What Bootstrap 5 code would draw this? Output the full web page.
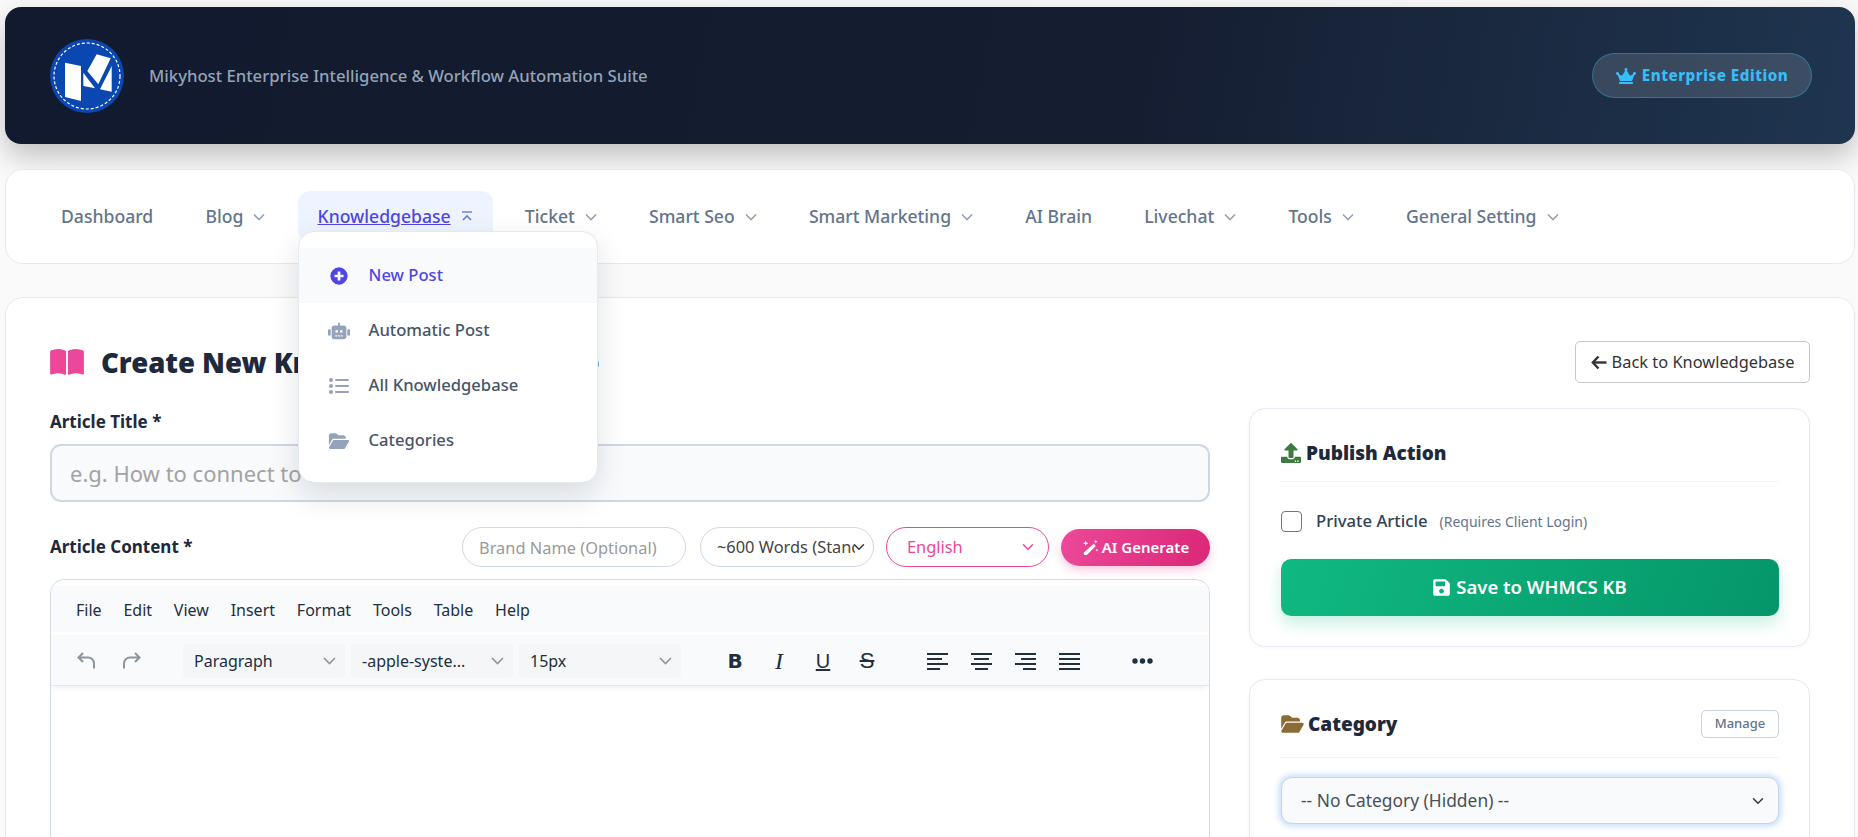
<!DOCTYPE html>
<html lang="en">
<head>
<meta charset="UTF-8">
<title>Create New Knowledgebase Article</title>
<link href="https://cdn.jsdelivr.net/npm/bootstrap@5.3.0/dist/css/bootstrap.min.css" rel="stylesheet">
<style>
    html, body { height: 837px; overflow: hidden; }
    body { background: #fafafb; font-family: "Noto Sans", sans-serif; color: #1e293b; padding: 7px 3px 0 5px; }
    svg { fill: currentColor; flex-shrink: 0; }

    .top-banner { height: 137px; border-radius: 16px; background: linear-gradient(100deg, #111a2e 0%, #151d30 60%, #1f3550 100%); box-shadow: 0 12px 30px rgba(0,0,0,.24); padding: 0 43px 0 45px; margin-bottom: 25px; }
    .top-tagline { font-size: 16.7px; font-weight: 500; color: #94a3b8; margin-left: 25px; }
    .edition-pill { height: 45px; width: 220px; border-radius: 23px; background: rgba(255,255,255,.13); border: 1px solid rgba(56,189,248,.35); color: #38bdf8; font-size: 15.2px; font-weight: 800; letter-spacing: .5px; gap: 6px; }

    .main-nav { height: 95px; background: #fff; border: 1px solid #e5e9ef; border-radius: 18px; padding: 21px 35px; gap: 12.2px; margin-bottom: 33px; }
    .nav-entry { position: relative; height: 51px; padding: 0 20px; border-radius: 12px; font-size: 17.6px; font-weight: 500; color: #64748b; gap: 10px; }
    .nav-entry svg { color: #94a3b8; }
    .nav-entry.is-open { background: #eef4ff; color: #4f46e5; }
    .nav-entry.is-open > span { text-decoration: underline; }
    .kb-menu { position: absolute; top: 40px; left: 0; width: 300px; margin: 0; padding: 16px 0 14px; border: 1px solid #e5e9f2; border-radius: 16px; box-shadow: 0 12px 30px rgba(15,23,42,.13); z-index: 20; }
    .kb-menu .dropdown-item { height: 55px; padding: 0 29px; font-size: 16.6px; font-weight: 500; color: #475569; gap: 19px; }
    .kb-menu .dropdown-item svg { color: #94a3b8; width: 22px; }
    .kb-menu .dropdown-item.is-current { background: #f8fafc; color: #4f46e5; }
    .kb-menu .dropdown-item.is-current svg { color: #4f46e5; }

    .page-panel { height: 620px; background: #fff; border: 1px solid #e5e9ef; border-radius: 18px; padding: 43px 44px; }
    .title-bar { height: 42px; margin-bottom: 25px; }
    .title-bar h1 { font-size: 27.5px; font-weight: 900; margin: 0 0 0 17px; color: #1e293b; }
    .title-bar svg.book { color: #ec4899; }
    .back-btn { height: 42px; width: 235px; padding: 0; font-size: 16.4px; color: #333; border-color: #c4c8cc; background: #fff; border-radius: 5px; gap: 5px; }
    .main-row { --bs-gutter-x: 40px; }

    .field-label { font-size: 17px; font-weight: 700; color: #1e293b; margin-bottom: 9px; line-height: 27px; display: block; }
    .title-input { height: 58px; background: #f8fafc; border: 2px solid #d0d8e4; border-radius: 11px; font-size: 22px; padding: 0 18px; margin-bottom: 25px; }
    .title-input::placeholder { color: #a3a3a3; }
    .content-head { height: 40px; margin-bottom: 12px; }
    .content-head .field-label { margin: 0 0 2px; }
    .pill-field { height: 40px; border-radius: 20px; font-size: 16.4px; border: 1.5px solid #d0d8e4; padding-left: 16px; }
    .pill-field::placeholder { color: #9a9a9a; }
    .brand-field { width: 224px; margin-right: 2px; }
    .words-field { width: 174px; color: #444; padding-right: 18px; background-position: right 6px center; }
    .lang-field { width: 163px; color: #ec4899; border-color: #ec4899; padding-left: 20px; background-image: url("data:image/svg+xml,%3csvg xmlns='http://www.w3.org/2000/svg' viewBox='0 0 16 16'%3e%3cpath fill='none' stroke='%23ec4899' stroke-linecap='round' stroke-linejoin='round' stroke-width='2' d='m2 5 6 6 6-6'/%3e%3c/svg%3e"); }
    .gen-btn { height: 37px; width: 149px; padding: 0; border: 0; border-radius: 19px; font-size: 15px; font-weight: 600; color: #fff; background: linear-gradient(100deg, #ec4899, #db2777); box-shadow: 0 4px 10px rgba(236,72,153,.3); gap: 3px; }

    .editor-box { height: 600px; border: 1.5px solid #d3dbe6; border-radius: 14px; padding-top: 6px; overflow: hidden; }
    .editor-menu { height: 46px; background: #f8fafc; padding: 1px 25px 0; gap: 21.8px; font-size: 16px; color: #222f3e; margin-bottom: 3px; }
    .editor-tools { height: 51px; background: #f8fafc; border-bottom: 1px solid #e2e8f0; padding: 1px 0 0 25px; box-shadow: 0 4px 6px -2px rgba(0,0,0,.07); color: #222f3e; }
    .tool-btn { width: 26px; text-align: center; font-size: 21px; line-height: 1; }
    .tool-pick { height: 34px; width: 162px; background: #f5f6f7; border-radius: 3px; padding: 0 9px 0 11px; font-size: 16px; margin-left: 6px; }
    .tool-pick svg { color: #8d959e; }
    .first-pick { margin-left: 41px; }
    .letter-b { font-family: "DejaVu Sans", sans-serif; font-weight: 700; font-size: 20px; }
    .letter-i { font-family: "Liberation Serif", serif; font-style: italic; font-size: 24px; }
    .letter-u { font-family: "Liberation Sans", sans-serif; text-decoration: underline; font-size: 20px; }
    .letter-s { font-family: "Liberation Sans", sans-serif; text-decoration: line-through; font-size: 22px; }
    .tool-group-marks { margin-left: 41px; gap: 18px; }
    .tool-group-aligns { margin-left: 47px; gap: 23px; }
    .tool-more { margin-left: 52px; }

    .side-card { background: #fff; border: 1px solid #e5e9f2; border-radius: 16px; padding: 30px 30px 30px 31px; margin: 0 0 32px -1px; box-shadow: 0 1px 4px rgba(15,23,42,.03); }
    .side-head { border-bottom: 1px solid #f1f5f9; font-size: 19px; font-weight: 900; color: #1e293b; gap: 5px; }
    .publish-head { padding-bottom: 13px; }
    .publish-icon { color: #3d7a3f; }
    .category-head { padding-bottom: 19px; }
    .category-icon { color: #8a6a35; }
    .private-row { height: 21px; margin: 29px 0 27px; }
    .private-check { width: 21px; height: 21px; margin: 0 14px 0 0; border: 1.5px solid #767676; border-radius: 4px; }
    .private-row label { font-size: 16.7px; font-weight: 500; color: #334155; }
    .private-row small { font-size: 14px; color: #64748b; margin-left: 12px; }
    .save-btn { height: 57px; width: 100%; border: 0; border-radius: 10px; background: linear-gradient(110deg, #10b981, #059669); color: #fff; font-size: 18.5px; font-weight: 600; box-shadow: 0 8px 16px rgba(16,185,129,.22); gap: 6px; }
    .manage-btn { height: 28px; width: 78px; padding: 0; font-size: 13px; font-weight: 500; color: #64748b; border: 1px solid #cbd5e1; border-radius: 5px; background: #fff; }
    .cat-select { height: 47px; background-color: #f8fafc; border: 1px solid #c5d3e4; border-radius: 11px; font-size: 17.4px; color: #495057; padding-left: 19px; box-shadow: 0 0 0 1px #d8eafc, 0 0 6px 2px #bfdbfe; margin-top: 19px; }
</style>
</head>
<body>

<header class="top-banner d-flex align-items-center">
    <svg width="74" height="74" viewBox="0 0 74 74">
        <circle cx="37" cy="37" r="37" fill="#0b47b0"/>
        <circle cx="37" cy="37" r="33" fill="none" stroke="#fff" stroke-width="1.2" stroke-dasharray="3 2"/>
        <g fill="#fff">
            <polygon points="15,23.7 31,27 31,62 15,58"/>
            <polygon points="33.3,33.7 45,49.3 33.3,47"/>
            <polygon points="46.7,15.3 60.7,19.3 48.3,45.3 37.3,32"/>
            <polygon points="61.7,27 61.7,52.7 50,50.3"/>
        </g>
    </svg>
    <div class="top-tagline">Mikyhost Enterprise Intelligence &amp; Workflow Automation Suite</div>
    <div class="edition-pill d-flex align-items-center justify-content-center ms-auto">
        <svg width="20" height="16" viewBox="0 0 640 512"><path d="M528 448H112c-8.800 0-16 7.200-16 16v32c0 8.800 7.200 16 16 16h416c8.800 0 16-7.200 16-16v-32c0-8.800-7.200-16-16-16zm64-320c-26.500 0-48 21.500-48 48 0 7.100 1.600 13.700 4.400 19.800L476 239.200c-15.400 9.200-35.300 4-44.200-11.600L350.300 85C361 76.200 368 63 368 48c0-26.500-21.500-48-48-48s-48 21.500-48 48c0 15 7 28.200 17.700 37l-81.500 142.600c-8.900 15.600-28.900 20.800-44.200 11.600l-72.300-43.400c2.700-6 4.400-12.700 4.400-19.800 0-26.500-21.500-48-48-48S0 149.500 0 176s21.500 48 48 48c2.600 0 5.200-.4 7.700-.8L128 416h384l72.300-192.800c2.500.4 5.100.8 7.700.8 26.500 0 48-21.500 48-48s-21.500-48-48-48z"/></svg>
        Enterprise Edition
    </div>
</header>

<nav class="main-nav d-flex">
    <div class="nav-entry d-flex align-items-center"><span>Dashboard</span></div>
    <div class="nav-entry d-flex align-items-center"><span>Blog</span><svg width="12" height="8" viewBox="0 0 12 8"><path d="M1 1.500 6 6.500 11 1.500" fill="none" stroke="currentColor" stroke-width="1.600"/></svg></div>
    <div class="nav-entry is-open d-flex align-items-center"><span>Knowledgebase</span>
        <svg width="12" height="12" viewBox="0 0 12 12"><path d="M1 1h10" fill="none" stroke="#6b7bd0" stroke-width="1.400"/><path d="M2 9 6 5 10 9" fill="none" stroke="#6b7bd0" stroke-width="1.600"/></svg>
        <div class="dropdown-menu show kb-menu">
            <a class="dropdown-item is-current d-flex align-items-center" href="#"><svg width="20" height="20" viewBox="0 0 22 22"><path fill-rule="evenodd" d="M11 1.500a9.500 9.500 0 1 0 0 19 9.500 9.500 0 0 0 0-19zM9.500 6h3v3.500H16v3h-3.500V16h-3v-3.500H6v-3h3.500z"/></svg>New Post</a>
            <a class="dropdown-item d-flex align-items-center" href="#"><svg width="24" height="20" viewBox="0 0 24 20"><path fill-rule="evenodd" d="M11 1h2v3h4a3 3 0 0 1 3 3v9a3 3 0 0 1-3 3H7a3 3 0 0 1-3-3V7a3 3 0 0 1 3-3h4zM8 10.500a1.500 1.500 0 1 0 3 0 1.500 1.500 0 0 0-3 0zm5 0a1.500 1.500 0 1 0 3 0 1.500 1.500 0 0 0-3 0zM8 14.500v1.500h2v-1.500zm3 0v1.500h2v-1.500zm3 0v1.500h2v-1.500z"/><rect x="0" y="8" width="3" height="7" rx="1"/><rect x="21" y="8" width="3" height="7" rx="1"/></svg>Automatic Post</a>
            <a class="dropdown-item d-flex align-items-center" href="#"><svg width="20" height="18" viewBox="0 0 20 18"><circle cx="2" cy="3" r="2"/><circle cx="2" cy="9" r="2"/><circle cx="2" cy="15" r="2"/><rect x="6" y="2" width="14" height="2" rx="1"/><rect x="6" y="8" width="14" height="2" rx="1"/><rect x="6" y="14" width="14" height="2" rx="1"/></svg>All Knowledgebase</a>
            <a class="dropdown-item d-flex align-items-center" href="#"><svg width="22" height="18" viewBox="0 0 576 512"><path d="M88.700 223.800L0 375.800V96C0 60.700 28.700 32 64 32H181.500c17 0 33.300 6.700 45.300 18.700l26.500 26.500c12 12 28.300 18.700 45.300 18.700H416c35.300 0 64 28.700 64 64v32H144c-22.800 0-43.800 12.100-55.300 31.800zm27.600 16.100C122.100 230 132.600 224 144 224H544c11.500 0 22 6.100 27.700 16.100s5.700 22.200-.1 32.100l-112 192C453.900 474 443.400 480 432 480H32c-11.500 0-22-6.100-27.700-16.100s-5.700-22.200 .1-32.100l112-192z"/></svg>Categories</a>
        </div>
    </div>
    <div class="nav-entry d-flex align-items-center"><span>Ticket</span><svg width="12" height="8" viewBox="0 0 12 8"><path d="M1 1.500 6 6.500 11 1.500" fill="none" stroke="currentColor" stroke-width="1.600"/></svg></div>
    <div class="nav-entry d-flex align-items-center"><span>Smart Seo</span><svg width="12" height="8" viewBox="0 0 12 8"><path d="M1 1.500 6 6.500 11 1.500" fill="none" stroke="currentColor" stroke-width="1.600"/></svg></div>
    <div class="nav-entry d-flex align-items-center"><span>Smart Marketing</span><svg width="12" height="8" viewBox="0 0 12 8"><path d="M1 1.500 6 6.500 11 1.500" fill="none" stroke="currentColor" stroke-width="1.600"/></svg></div>
    <div class="nav-entry d-flex align-items-center"><span>AI Brain</span></div>
    <div class="nav-entry d-flex align-items-center"><span>Livechat</span><svg width="12" height="8" viewBox="0 0 12 8"><path d="M1 1.500 6 6.500 11 1.500" fill="none" stroke="currentColor" stroke-width="1.600"/></svg></div>
    <div class="nav-entry d-flex align-items-center"><span>Tools</span><svg width="12" height="8" viewBox="0 0 12 8"><path d="M1 1.500 6 6.500 11 1.500" fill="none" stroke="currentColor" stroke-width="1.600"/></svg></div>
    <div class="nav-entry d-flex align-items-center"><span>General Setting</span><svg width="12" height="8" viewBox="0 0 12 8"><path d="M1 1.500 6 6.500 11 1.500" fill="none" stroke="currentColor" stroke-width="1.600"/></svg></div>
</nav>

<main class="page-panel">
    <div class="title-bar d-flex align-items-center">
        <svg class="book" width="34" height="30" viewBox="0 0 576 512"><path d="M249.600 471.500c10.800 3.800 22.400-4.100 22.400-15.500V78.600c0-4.200-1.600-8.400-5-11C247.400 52 202.400 32 144 32C93.500 32 46.300 45.300 18.100 56.100C6.800 60.500 0 71.700 0 83.800V454.100c0 11.900 12.800 20.200 24.100 16.500C55.600 460.100 105.500 448 144 448c33.900 0 79 14 105.600 23.500zm76.800 0C353 462 398.100 448 432 448c38.500 0 88.400 12.100 119.900 22.600c11.300 3.800 24.100-4.600 24.100-16.500V83.800c0-12.100-6.800-23.300-18.100-27.600C529.700 45.300 482.500 32 432 32c-58.400 0-103.400 20-123 35.600c-3.300 2.600-5 6.800-5 11V456c0 11.400 11.700 19.300 22.400 15.500z"/></svg>
        <h1>Create New Knowledgebase Article</h1>
        <button class="btn back-btn d-flex align-items-center justify-content-center ms-auto"><svg width="16" height="15" viewBox="0 0 16 15"><path d="M7.500 1.500 1.800 7.500l5.700 6" fill="none" stroke="currentColor" stroke-width="2.400"/><path d="M2.500 7.500H15.500" stroke="currentColor" stroke-width="2.400"/></svg>Back to Knowledgebase</button>
    </div>

    <div class="row main-row">
        <div class="col-8">
            <label class="field-label">Article Title *</label>
            <input class="form-control title-input" type="text" placeholder="e.g. How to connect to FTP">

            <div class="content-head d-flex align-items-center gap-2">
                <label class="field-label me-auto">Article Content *</label>
                <input class="form-control pill-field brand-field" type="text" placeholder="Brand Name (Optional)">
                <select class="form-select pill-field words-field ms-1"><option>~600 Words (Standard)</option></select>
                <select class="form-select pill-field lang-field ms-1"><option>English</option></select>
                <button class="btn gen-btn d-flex align-items-center justify-content-center ms-1">
                    <svg width="17" height="17" viewBox="0 0 16 16"><path d="M11 4.500 13 6.500 4.500 15 2 15 1.500 13z"/><path d="M3.500 1.500 4.200 3.300 6 4 4.200 4.700 3.500 6.500 2.800 4.700 1 4 2.800 3.300zM13 0.500 13.500 2 15 2.500 13.500 3 13 4.500 12.500 3 11 2.500 12.500 2zM14 9 14.400 10.100 15.500 10.500 14.400 10.900 14 12 13.600 10.900 12.500 10.500 13.600 10.100z"/></svg>
                    AI Generate
                </button>
            </div>

            <div class="editor-box">
                <div class="editor-menu d-flex align-items-center">
                    <span>File</span><span>Edit</span><span>View</span><span>Insert</span><span>Format</span><span>Tools</span><span>Table</span><span>Help</span>
                </div>
                <div class="editor-tools d-flex align-items-center">
                    <svg width="21" height="21" viewBox="0 0 21 21"><path d="M7 3 2.500 7.500 7 12M3 7.500h9a6 6 0 0 1 6 6v5" fill="none" stroke="#8d959e" stroke-width="2"/></svg>
                    <svg width="21" height="21" viewBox="0 0 21 21" class="ms-4"><path d="M14 3 18.500 7.500 14 12M18 7.500H9a6 6 0 0 0-6 6v5" fill="none" stroke="#8d959e" stroke-width="2"/></svg>
                    <div class="tool-pick d-flex align-items-center justify-content-between first-pick"><span>Paragraph</span><svg width="13" height="8" viewBox="0 0 13 8"><path d="M1 1 6.500 6.500 12 1" fill="none" stroke="currentColor" stroke-width="1.600"/></svg></div>
                    <div class="tool-pick d-flex align-items-center justify-content-between"><span>-apple-syste...</span><svg width="13" height="8" viewBox="0 0 13 8"><path d="M1 1 6.500 6.500 12 1" fill="none" stroke="currentColor" stroke-width="1.600"/></svg></div>
                    <div class="tool-pick d-flex align-items-center justify-content-between"><span>15px</span><svg width="13" height="8" viewBox="0 0 13 8"><path d="M1 1 6.500 6.500 12 1" fill="none" stroke="currentColor" stroke-width="1.600"/></svg></div>
                    <div class="d-flex align-items-center tool-group-marks">
                        <span class="tool-btn letter-b">B</span><span class="tool-btn letter-i">I</span><span class="tool-btn letter-u">U</span><span class="tool-btn letter-s">S</span>
                    </div>
                    <div class="d-flex align-items-center tool-group-aligns">
                        <svg width="21" height="18" viewBox="0 0 21 18"><rect y="1" width="21" height="2"/><rect y="6" width="15" height="2"/><rect y="11" width="21" height="2"/><rect y="16" width="13" height="2"/></svg>
                        <svg width="21" height="18" viewBox="0 0 21 18"><rect y="1" width="21" height="2"/><rect x="3" y="6" width="15" height="2"/><rect y="11" width="21" height="2"/><rect x="4" y="16" width="13" height="2"/></svg>
                        <svg width="21" height="18" viewBox="0 0 21 18"><rect y="1" width="21" height="2"/><rect x="6" y="6" width="15" height="2"/><rect y="11" width="21" height="2"/><rect x="8" y="16" width="13" height="2"/></svg>
                        <svg width="21" height="18" viewBox="0 0 21 18"><rect y="1" width="21" height="2"/><rect y="6" width="21" height="2"/><rect y="11" width="21" height="2"/><rect y="16" width="21" height="2"/></svg>
                    </div>
                    <svg class="tool-more" width="21" height="6" viewBox="0 0 21 6"><circle cx="3" cy="3" r="2.700"/><circle cx="10.500" cy="3" r="2.700"/><circle cx="18" cy="3" r="2.700"/></svg>
                </div>
            </div>
        </div>

        <div class="col-4">
            <section class="side-card">
                <div class="side-head d-flex align-items-center publish-head">
                    <svg class="publish-icon" width="20" height="20" viewBox="0 0 512 512"><path d="M296 384h-80c-13.300 0-24-10.700-24-24V192h-87.700c-17.800 0-26.700-21.500-14.100-34.100L242.300 5.700c7.500-7.500 19.800-7.500 27.300 0l152.200 152.200c12.600 12.600 3.700 34.100-14.100 34.100H320v168c0 13.300-10.700 24-24 24zm216-8v112c0 13.300-10.700 24-24 24H24c-13.300 0-24-10.700-24-24V376c0-13.300 10.700-24 24-24h136v8c0 30.900 25.100 56 56 56h80c30.900 0 56-25.100 56-56v-8h136c13.300 0 24 10.700 24 24zm-124 88c0-11-9-20-20-20s-20 9-20 20 9 20 20 20 20-9 20-20zm64 0c0-11-9-20-20-20s-20 9-20 20 9 20 20 20 20-9 20-20z"/></svg>
                    Publish Action
                </div>
                <div class="private-row d-flex align-items-center">
                    <input class="form-check-input private-check" type="checkbox">
                    <label>Private Article</label>
                    <small>(Requires Client Login)</small>
                </div>
                <button class="btn save-btn d-flex align-items-center justify-content-center">
                    <svg width="17" height="19" viewBox="0 0 448 512"><path d="M433.941 129.941l-83.882-83.882A48 48 0 0 0 316.118 32H48C21.490 32 0 53.490 0 80v352c0 26.510 21.490 48 48 48h352c26.510 0 48-21.490 48-48V163.882a48 48 0 0 0-14.059-33.941zM224 416c-35.346 0-64-28.654-64-64 0-35.346 28.654-64 64-64s64 28.654 64 64c0 35.346-28.654 64-64 64zm96-304.520V212c0 6.627-5.373 12-12 12H76c-6.627 0-12-5.373-12-12V108c0-6.627 5.373-12 12-12h228.520c3.183 0 6.235 1.264 8.485 3.515l3.480 3.480A11.996 11.996 0 0 1 320 111.480z"/></svg>
                    Save to WHMCS KB
                </button>
            </section>
            <section class="side-card">
                <div class="side-head d-flex align-items-center justify-content-between category-head">
                    <span class="d-flex align-items-center gap-1">
                        <svg class="category-icon" width="23" height="20" viewBox="0 0 576 512"><path d="M88.700 223.800L0 375.800V96C0 60.700 28.700 32 64 32H181.500c17 0 33.300 6.700 45.300 18.700l26.500 26.500c12 12 28.300 18.700 45.300 18.700H416c35.300 0 64 28.700 64 64v32H144c-22.800 0-43.800 12.100-55.300 31.800zm27.600 16.100C122.100 230 132.600 224 144 224H544c11.500 0 22 6.100 27.700 16.100s5.700 22.200-.1 32.100l-112 192C453.900 474 443.400 480 432 480H32c-11.500 0-22-6.100-27.700-16.100s-5.700-22.200 .1-32.100l112-192z"/></svg>
                        Category
                    </span>
                    <button class="btn manage-btn">Manage</button>
                </div>
                <select class="form-select cat-select"><option>-- No Category (Hidden) --</option></select>
            </section>
        </div>
    </div>
</main>

</body>
</html>
